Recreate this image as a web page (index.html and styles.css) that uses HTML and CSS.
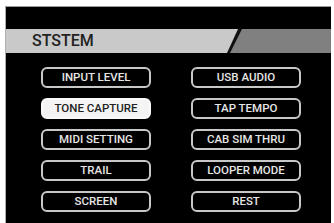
FILE: index.html
```html
<!DOCTYPE html>
<html lang="en">
<head>
    <meta charset="UTF-8">
    <title>System</title>
    <link rel="stylesheet" href="styles.css">
</head>
<body>

<div class="screen">
    <div class="header">
        <div class="tab">
            <div class="tab-label">STSTEM</div>
        </div>
    </div>

    <div class="menu">
        <div class="menu-item">INPUT LEVEL</div>
        <div class="menu-item">USB AUDIO</div>
        <div class="menu-item selected">TONE CAPTURE</div>
        <div class="menu-item">TAP TEMPO</div>
        <div class="menu-item">MIDI SETTING</div>
        <div class="menu-item">CAB SIM THRU</div>
        <div class="menu-item">TRAIL</div>
        <div class="menu-item">LOOPER MODE</div>
        <div class="menu-item">SCREEN</div>
        <div class="menu-item">REST</div>
    </div>
</div>

</body>
</html>
```

FILE: styles.css
```css
body {
    margin: 0;
    background-color: #ffffff;
    font-family: Roboto, "Liberation Sans", sans-serif;
}

.screen {
    margin: 6px 3px 0 5px;
    height: 217px;
    background-color: #000;
    border-top: 1px solid #9a9a9a;
    border-left: 1px solid #b0b0b0;
    box-sizing: border-box;
    overflow: hidden;
}

.header {
    margin-top: 22px;
    height: 24px;
    display: flex;
    background-color: #808080;
}

.tab {
    width: 236px;
    background-color: #111;
    clip-path: polygon(0 0, 236px 0, 224px 100%, 0 100%);
}

.tab-label {
    height: 100%;
    padding-left: 26px;
    background-color: #c9c9c9;
    clip-path: polygon(0 0, 232px 0, 221px 100%, 0 100%);
    color: #222;
    font-size: 16px;
    font-weight: 500;
    line-height: 24px;
}

.menu {
    display: grid;
    grid-template-columns: 110px 110px;
    column-gap: 40px;
    row-gap: 10px;
    padding: 14px 0 0 35px;
}

.menu-item {
    height: 21px;
    box-sizing: border-box;
    border: 2px solid #c8c8c8;
    border-radius: 6px;
    color: #e6e6e6;
    font-size: 11.5px;
    font-weight: 500;
    line-height: 17px;
    text-align: center;
}

.selected {
    background-color: #f4f4f4;
    border-color: #fafafa;
    color: #222;
}
```
